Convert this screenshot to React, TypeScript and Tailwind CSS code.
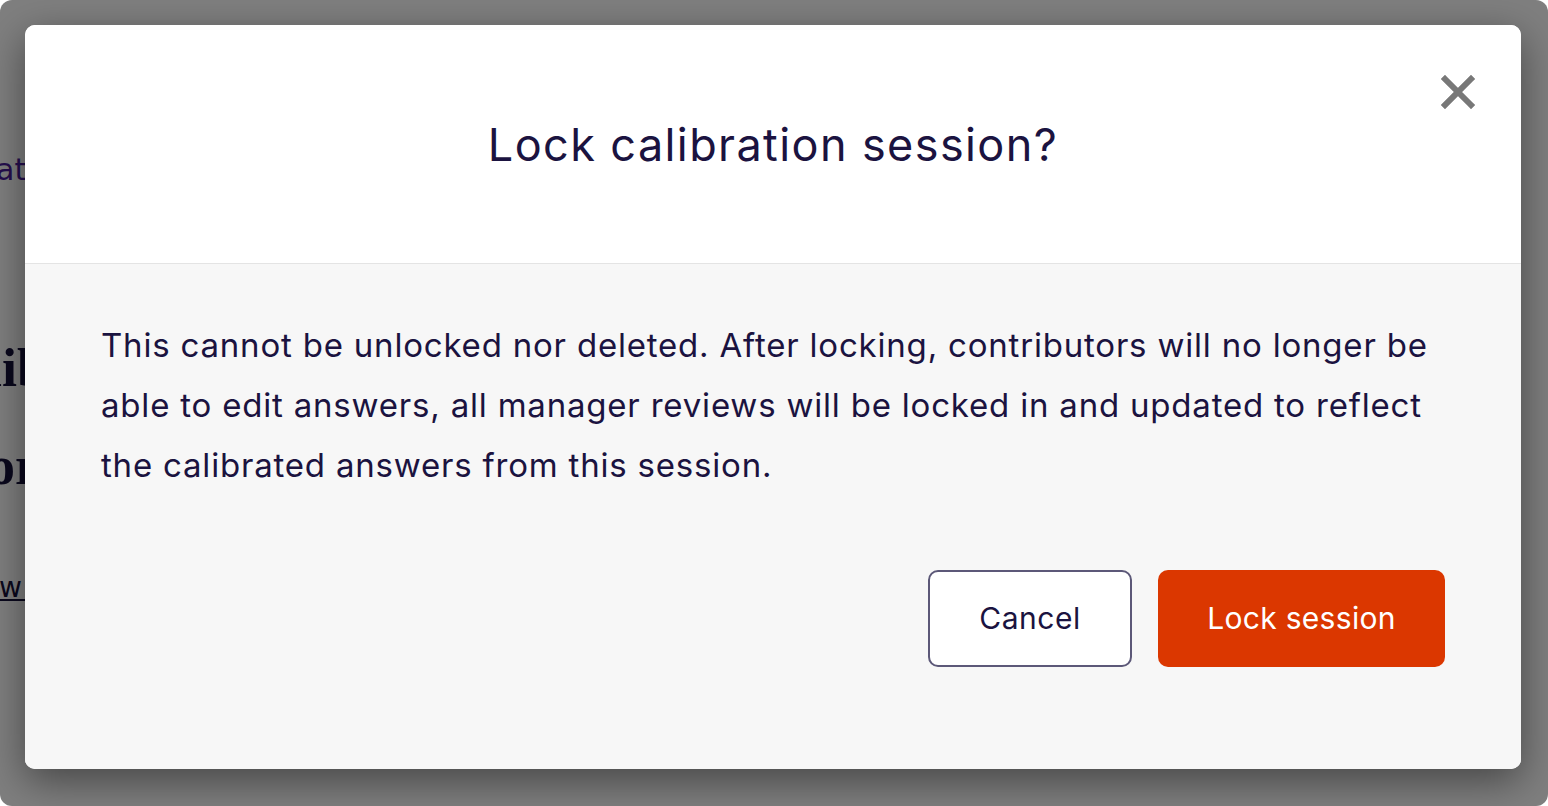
export default function App() {
  return (
    <div className="h-[806px] w-[1548px] bg-white" style={{ fontFamily: 'Inter, "Noto Sans", sans-serif' }}>
      <div className="relative h-full w-full overflow-hidden rounded-[12px] bg-white">
        {/* page behind the dialog */}
        <div className="flex flex-col pt-[150px]">
          <div className="-ml-[4px] whitespace-nowrap text-[30px] leading-[40px] text-[#4b1d9c]" style={{ fontFamily: '"DejaVu Sans", sans-serif' }}>
            ation settings
          </div>
          <div className="-ml-[13px] mt-[146px] whitespace-nowrap text-[54px] font-bold leading-[64px] text-[#15103a]" style={{ fontFamily: '"Liberation Serif", serif' }}>
            libration
          </div>
          <div className="-ml-[12px] mt-[34px] whitespace-nowrap text-[54px] font-bold leading-[64px] text-[#15103a]" style={{ fontFamily: '"Liberation Serif", serif' }}>
            or review
          </div>
          <div className="-ml-[1px] mt-[72px] whitespace-nowrap text-[28px] leading-[36px] text-[#15103a] underline" style={{ fontFamily: '"DejaVu Sans", sans-serif' }}>
            w details
          </div>
        </div>

        {/* overlay + dialog */}
        <div className="absolute inset-0 bg-black/50 pl-[25px] pt-[25px]">
          <div className="flex h-[744px] w-[1496px] flex-col overflow-hidden rounded-[10px] bg-white shadow-[0_12px_40px_rgba(0,0,0,0.45)]">
            <div className="relative flex h-[239px] shrink-0 items-center justify-center border-b border-[#e4e4e4] bg-white">
              <h2 className="text-[45px] leading-none tracking-[1.4px] text-[#1b1340]">Lock calibration session?</h2>
              <button className="absolute right-[46px] top-[50px] flex h-[34px] w-[34px] items-center justify-center" aria-label="Close">
                <svg width="34" height="34" viewBox="0 0 34 34">
                  <path d="M4 4L30 30M30 4L4 30" stroke="#787878" strokeWidth="6" strokeLinecap="square" />
                </svg>
              </button>
            </div>
            <div className="flex flex-1 flex-col bg-[#f7f7f7] px-[76px] pt-[51px]">
              <p className="text-[33px] leading-[60px] tracking-[0.8px] text-[#1b1340]">
                This cannot be unlocked nor deleted. After locking, contributors will no longer be able to edit answers, all manager reviews will be locked in and updated to reflect the calibrated answers from this session.
              </p>
              <div className="mt-[75px] flex justify-end gap-[26px]">
                <button className="h-[97px] w-[204px] rounded-[10px] border-2 border-[#5c5878] bg-white text-[30px] tracking-[0.5px] text-[#1b1340]">
                  Cancel
                </button>
                <button className="h-[97px] w-[287px] rounded-[10px] bg-[#db3700] text-[30px] tracking-[0.3px] text-white">
                  Lock session
                </button>
              </div>
            </div>
          </div>
        </div>
      </div>
    </div>
  );
}
